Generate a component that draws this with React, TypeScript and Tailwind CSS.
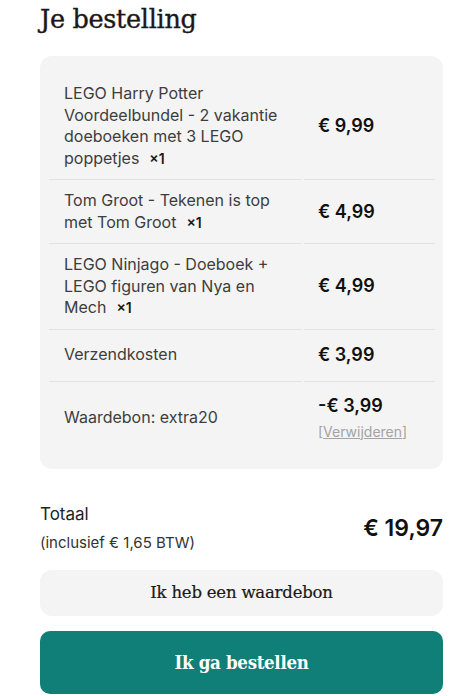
import React from "react";

const sans = { fontFamily: "Inter, 'Liberation Sans', sans-serif" };
const serif = { fontFamily: "'DejaVu Serif', 'Liberation Serif', serif" };
const serifC = { fontFamily: "'DejaVu Serif Condensed', 'DejaVu Serif', serif" };

type Row = { name: string; qty?: boolean; price: string; extra?: boolean; last?: boolean; single?: boolean };

const rows: Row[] = [
  { name: "LEGO Harry Potter Voordeelbundel - 2 vakantie doeboeken met 3 LEGO poppetjes", qty: true, price: "€ 9,99" },
  { name: "Tom Groot - Tekenen is top met Tom Groot", qty: true, price: "€ 4,99" },
  { name: "LEGO Ninjago - Doeboek + LEGO figuren van Nya en Mech", qty: true, price: "€ 4,99" },
  { name: "Verzendkosten", price: "€ 3,99", single: true },
  { name: "Waardebon: extra20", price: "-€ 3,99", extra: true, last: true },
];

export default function App() {
  return (
    <div className="w-[475px] h-[696px] bg-white overflow-hidden pl-[40px] pr-[32px] pt-[3px]" style={sans}>
      <h1
        className="text-[25.5px] leading-[32px] text-[#1d1718] tracking-[-0.3px] [-webkit-text-stroke:0.35px_#1d1718]"
        style={serif}
      >
        Je bestelling
      </h1>
      <div className="mt-[21px] bg-[#f4f4f4] rounded-[12px] pl-[9px] pr-[8px] pt-[17px] h-[413px]">
        {rows.map((r, i) => (
          <div key={i} className="flex gap-[2px]">
            <div
              className={`w-[253px] shrink-0 pl-[15px] pr-[14px] flex items-center text-[16px] leading-[21.5px] text-[#3d3d3d] ${
                r.last ? "pt-[12px] pb-[10px]" : "border-b border-[#e2e2e2] py-[10px]"
              } ${r.single ? "min-h-[52px]" : ""}`}
            >
              <p>
                {r.name}
                {r.qty && (
                  <b className="ml-[10px] inline-block whitespace-nowrap font-semibold text-[#1a1a1a] text-[14px] leading-[21.5px]">
                    ×1
                  </b>
                )}
              </p>
            </div>
            <div
              className={`w-[131px] shrink-0 pl-[14px] flex flex-col justify-center ${
                r.last ? "pt-[12px] pb-[10px]" : "border-b border-[#e2e2e2]"
              }`}
            >
              <div className="text-[18px] font-semibold text-[#111111] leading-[24px]">{r.price}</div>
              {r.extra && (
                <div className="text-[14px] text-[#a3a3a3] leading-[20px] mt-[4px]">
                  [<span className="underline">Verwijderen</span>]
                </div>
              )}
            </div>
          </div>
        ))}
      </div>
      <div className="mt-[34px] flex items-center justify-between">
        <div>
          <div className="text-[17px] leading-[22px] text-[#222]">Totaal</div>
          <div className="text-[15px] leading-[20px] text-[#333] mt-[8px]">(inclusief € 1,65 BTW)</div>
        </div>
        <div className="text-[23px] font-semibold text-[#111]">€ 19,97</div>
      </div>
      <button
        className="mt-[17px] w-full h-[46px] rounded-[12px] bg-[#f4f4f4] text-[16.5px] text-[#1d1718] tracking-[-0.2px] [-webkit-text-stroke:0.2px_#1d1718]"
        style={serif}
      >
        Ik heb een waardebon
      </button>
      <button
        className="mt-[15px] w-full h-[63px] rounded-[10px] bg-[#0f7f77] text-[18.5px] font-bold text-white tracking-[-0.3px]"
        style={serifC}
      >
        Ik ga bestellen
      </button>
    </div>
  );
}
